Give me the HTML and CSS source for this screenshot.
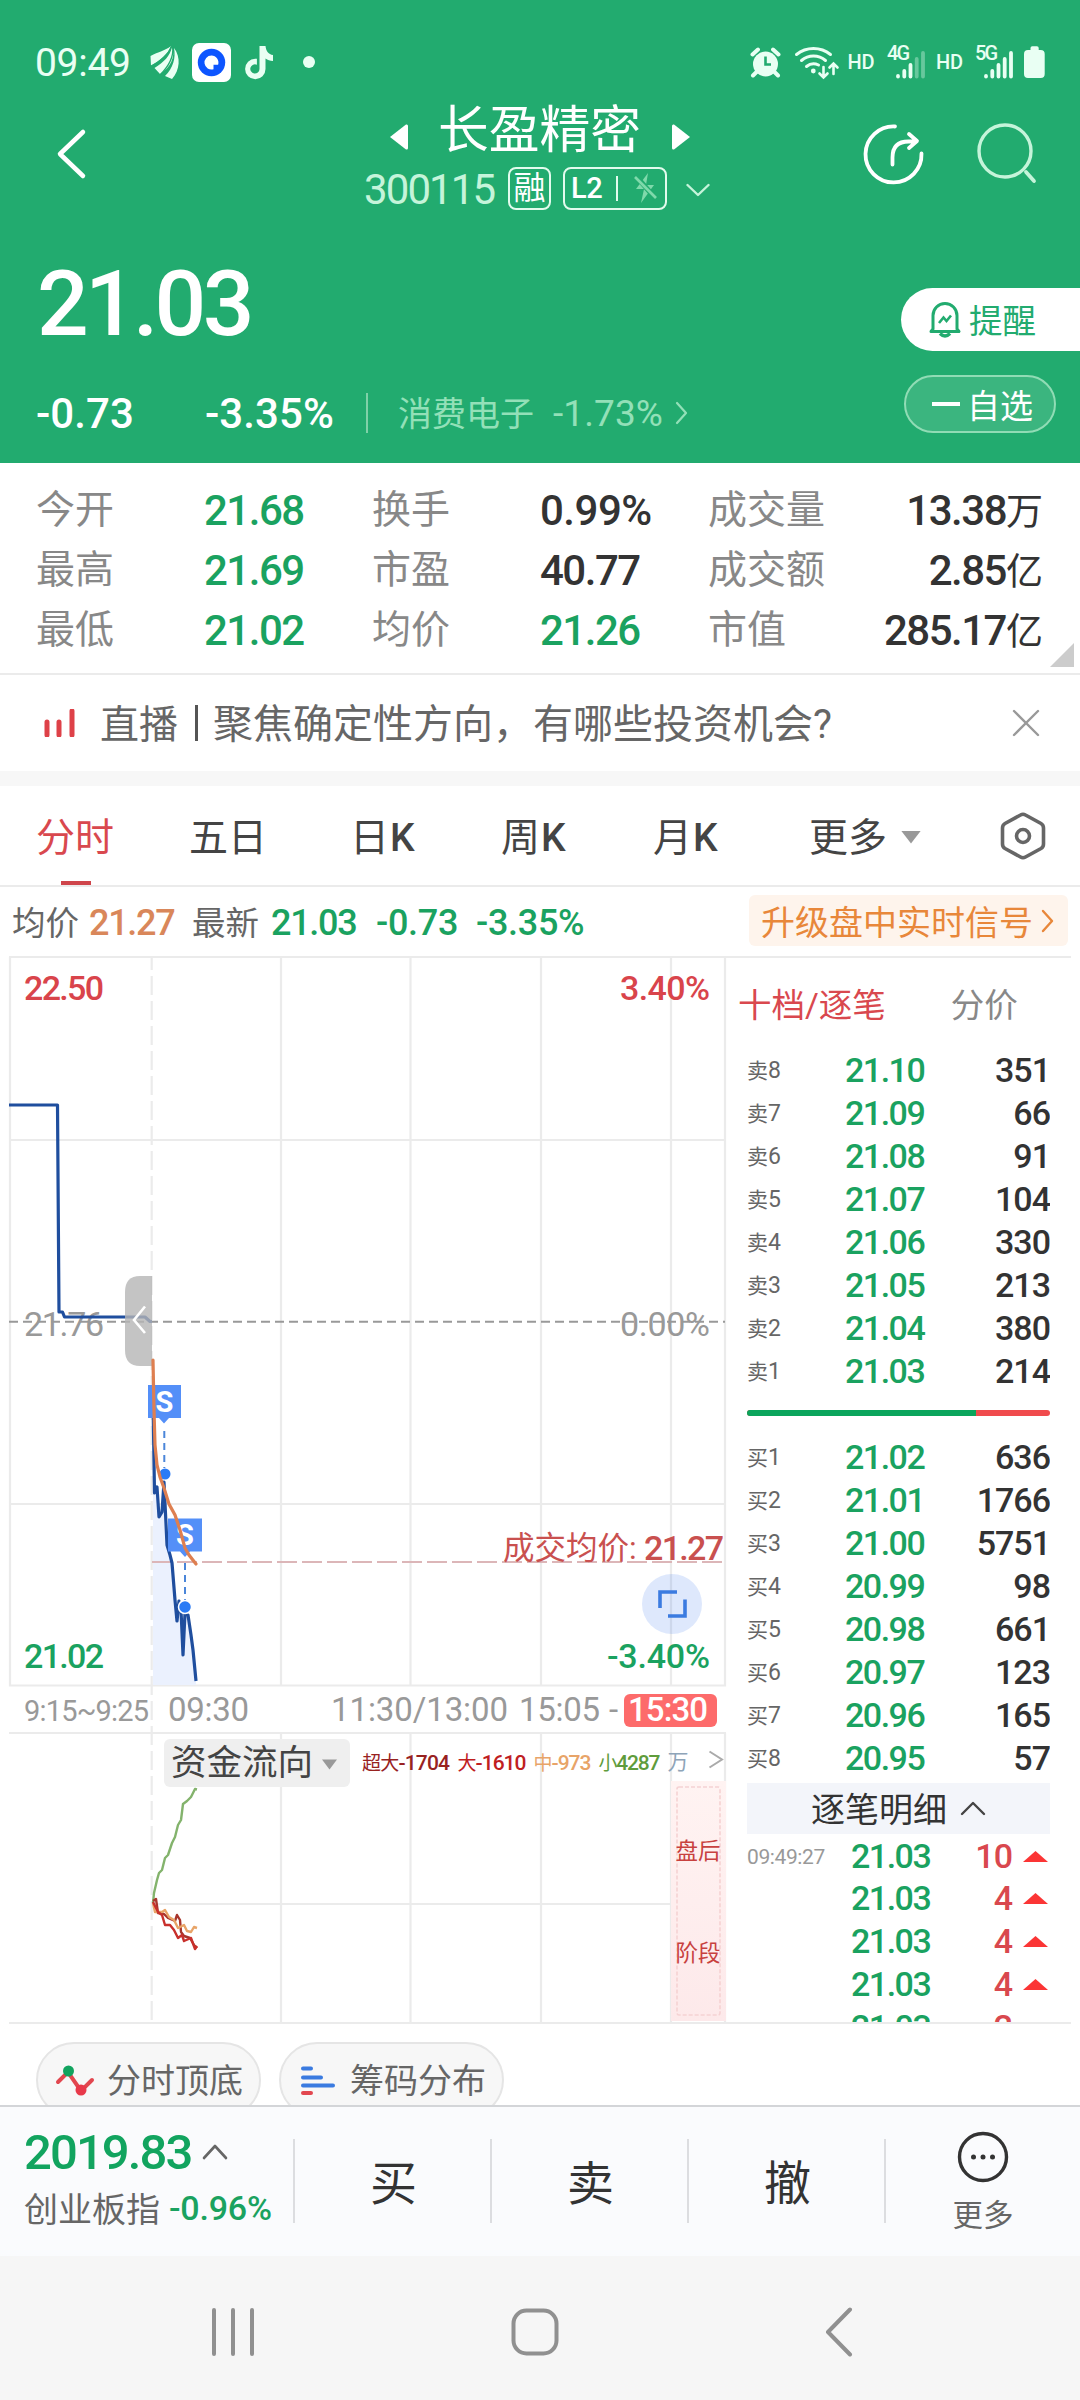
FILE: index.html
```html
<!DOCTYPE html>
<html lang="zh-CN">
<head>
<meta charset="utf-8">
<title>长盈精密 300115</title>
<link rel="stylesheet" href="styles.css">
</head>
<body>
<div class="screen">
<header class="hero">
  <div class="status">
    <span class="clock">09:49</span>
    <svg class="status-apps" width="172" height="44" viewBox="148 40 172 44" fill="#e9fff3">
      <path d="M150.500 56C157 52 165 51 171 46C168 54 160 60 151 66Z"/><path d="M154.500 68C164 62 170 56 172 47C176 57 170 68 160 74Z"/><path d="M165 76C173 68 176 58 174 48C181 57 180 70 172 79Z" /><path d="M150 66.500C160 62 168 56 171.500 46.500M160 75C168 67 174 58 172.700 47" fill="none" stroke="#22ab6f" stroke-width="1.300"/>
      <rect x="192" y="43" width="39" height="39" rx="7" fill="#fff"/>
      <circle cx="211.500" cy="62.500" r="13.700" fill="#0d55ff"/>
      <path d="M211.500 55.500a7 7 0 1 0 2 13.700v-4.500h4.600a7 7 0 0 0-6.600-9.200z" fill="#fff"/>
      <path d="M259.500 46h6c.500 5 3 8.500 7.500 9v6c-3 0-5.500-1-7.500-2.500v10.500a10.200 10.200 0 1 1-10.200-10.200h1.600v6a4.600 4.600 0 1 0 2.600 4.200z"/>
      <circle cx="309" cy="62" r="6"/>
    </svg>
    <svg class="status-sys" width="300" height="44" viewBox="748 40 300 44" fill="#e9fff3" stroke="none">
      <circle cx="765.500" cy="64" r="12.500"/><path d="M752.500 55l5.500-5M778.500 55l-5.500-5M757 72l-4 4M774 72l4 4" stroke="#e9fff3" stroke-width="4" stroke-linecap="round" transform="translate(0 -.5)"/><path d="M765.500 56.500v8h5.500" fill="none" stroke="#22ab6f" stroke-width="2.600"/>
      <g fill="none" stroke="#e9fff3" stroke-width="3" stroke-linecap="round"><path d="M796.500 54.500a27 27 0 0 1 34 0"/><path d="M801.500 60.500a18.500 18.500 0 0 1 24 0"/><path d="M806.500 66.500a11 11 0 0 1 12 -1.500"/><path d="M823.500 67v10M819.500 73.500l4 4 4-4M833.500 74v-10M829.500 67.500l4-4 4 4" stroke-width="2.600"/></g><circle cx="813.300" cy="71" r="2.400"/>
      <text class="sys-text" x="847.500" y="69" textLength="27">HD</text>
      <text class="sys-text" x="887" y="59.500" font-size="19" textLength="23">4G</text>
      <g stroke="#e9fff3" stroke-width="3.800" stroke-linecap="round"><path d="M898 76v.500M904.300 71v5.500M910.500 65v11.500"/><path d="M916.700 59v17.500M923 53v23.500" opacity=".35"/></g>
      <text class="sys-text" x="936" y="69" textLength="27">HD</text>
      <text class="sys-text" x="975" y="59.500" font-size="19" textLength="23">5G</text>
      <path d="M986 76v.500M992.300 71v5.500M998.500 65v11.500M1004.700 59v17.500M1011 53v23.500" stroke="#e9fff3" stroke-width="3.800" stroke-linecap="round"/>
      <path d="M1030.500 50v-2q0-1.800 1.800-1.800h4.600q1.800 0 1.800 1.800v2h2q4 0 4 4v20q0 4-4 4h-12.700q-4 0-4-4v-20q0-4 4-4z"/>
    </svg>
  </div>

  <div class="titlebar">
    <svg class="back" width="34" height="56" viewBox="54 126 34 56"><path d="M83 132L60 154L83 176" class="ln white" stroke-width="4.500"/></svg>
    <div class="title-block">
      <div class="title-row">
        <svg width="20" height="28" viewBox="0 0 20 28"><path d="M1 14L17 1.500Q19 1 19 3V25Q19 27 17 26.500Z" fill="#fff"/></svg>
        <h1>长盈精密</h1>
        <svg width="20" height="28" viewBox="0 0 20 28"><path d="M19 14L3 1.500Q1 1 1 3V25Q1 27 3 26.500Z" fill="#fff"/></svg>
      </div>
      <div class="code-row">
        <span class="code">300115</span>
        <span class="tag tag-margin">融</span>
        <span class="tag tag-l2"><b>L2</b><i></i>
          <svg width="24" height="32" viewBox="0 0 24 32"><path d="M14 1L2 17H10L7 31L20 13H12Z" fill="#7fd9ab"/><path d="M1 3L22 27" stroke="#22ab6f" stroke-width="5"/><path d="M1 5L22 26" stroke="#7fd9ab" stroke-width="2.600"/></svg>
        </span>
        <svg class="drop" width="24" height="14" viewBox="0 0 24 14"><path d="M1.500 2L12 12L22.500 2" class="ln" stroke="#c5f4da" stroke-width="2.400"/></svg>
      </div>
    </div>
    <svg class="title-actions" width="180" height="70" viewBox="860 120 180 70">
      <path d="M895 127A28 28 0 1 0 921.500 154" class="ln white" stroke-width="3.800" transform="translate(0 -.5)"/>
      <path d="M892.500 164.500v-7q0-16 16-16h7M909 134l8 7-8 7" class="ln white" stroke-width="3.800"/>
      <circle cx="1005" cy="151" r="26" class="ln" stroke="#c5f4da" stroke-width="3.400"/><path d="M1026 172L1034 181" class="ln" stroke="#c5f4da" stroke-width="3.800"/>
    </svg>
  </div>

  <div class="quote">
    <div class="quote-main">
      <div class="price">21.03</div>
      <div class="change-row">
        <span class="chg">-0.73</span><span class="pct">-3.35%</span><i class="vline"></i>
        <span class="sector">消费电子</span><span class="sector-pct">-1.73%</span>
        <svg width="14" height="24" viewBox="0 0 14 24"><path d="M2 2L11 12L2 22" class="ln" stroke="#93e0b8" stroke-width="2.200"/></svg>
      </div>
    </div>
    <div class="quote-actions">
      <div class="remind">
        <svg width="34" height="38" viewBox="0 0 34 38" fill="none" stroke="#22ab6f" stroke-width="3"><path d="M5 28V14.500a12 12 0 0 1 24 0V28L31 30.500H3Z" stroke-linejoin="round"/><path d="M12 32.500q5 5 10 0" stroke-width="3.500"/><path d="M11 22l4.500-5.500 3 3.500 4.500-5.500" stroke-width="2.600"/></svg>
        <span>提醒</span>
      </div>
      <div class="watch"><i></i><span>自选</span></div>
    </div>
  </div>
</header>

<section class="stats">
  <span class="k">今开</span><span class="v g">21.68</span><span class="k">换手</span><span class="v wide">0.99%</span><span class="k">成交量</span><span class="v r">13.38<em>万</em></span>
  <span class="k">最高</span><span class="v g">21.69</span><span class="k">市盈</span><span class="v">40.77</span><span class="k">成交额</span><span class="v r">2.85<em>亿</em></span>
  <span class="k">最低</span><span class="v g">21.02</span><span class="k">均价</span><span class="v g">21.26</span><span class="k">市值</span><span class="v r">285.17<em>亿</em></span>
  <i class="corner"></i>
</section>

<section class="banner">
  <svg width="32" height="28" viewBox="0 0 32 28"><path d="M3 13v13M15 13v13M28 2v24" stroke="#de4148" stroke-width="5" stroke-linecap="round"/></svg>
  <span class="banner-tag">直播</span><i></i><span class="banner-text">聚焦确定性方向，有哪些投资机会?</span>
  <svg width="28" height="28" viewBox="0 0 28 28"><path d="M2 2L26 26M26 2L2 26" class="ln" stroke="#999" stroke-width="2.400"/></svg>
</section>

<nav class="tabs">
  <span class="tab active">分时</span><span class="tab">五日</span><span class="tab">日<b>K</b></span><span class="tab">周<b>K</b></span><span class="tab">月<b>K</b></span>
  <span class="tab">更多</span><i class="caret"></i>
  <svg width="46" height="48" viewBox="0 0 46 48" fill="none" stroke="#666" stroke-width="3.600"><path d="M20.500 3Q23 1.500 25.500 3L41 11.500Q43.500 13 43.500 16V32Q43.500 35 41 36.500L25.500 45Q23 46.500 20.500 45L5 36.500Q2.500 35 2.500 32V16Q2.500 13 5 11.500Z"/><circle cx="23" cy="24" r="6.500"/></svg>
</nav>

<section class="info">
  <span>均价</span><span class="n orange">21.27</span><span>最新</span><span class="n g">21.03</span><span class="n g signed">-0.73</span><span class="n g signed">-3.35%</span>
  <a class="signal"><span>升级盘中实时信号</span><svg width="14" height="24" viewBox="0 0 14 24"><path d="M2 2L11 12L2 22" class="ln" stroke="#e8873a" stroke-width="2.400"/></svg></a>
</section>

<main class="market">
  <svg class="chart" width="731" height="1068" viewBox="0 956 731 1068">
    <g stroke="#ebebeb" stroke-width="2.200" fill="none">
      <path d="M10 957V1685.500H725V957M281 957V1685M410.500 957V1685M541 957V1685M671 957V1685M10 1140H725M10 1504H725"/>
      <path d="M9 1733H726M9 2023H731M281 1733V2023M410.500 1733V2023M541 1733V2023M671 1733V2023M725 1733V2023M151 1904H671"/>
      <path d="M151.700 958V2023" stroke-dasharray="19 6" stroke-dashoffset="7"/>
    </g>
    <path d="M153 1400L154.500 1493L157 1487L159 1517L162 1512L164 1482L167 1545L172 1563L177 1621L181 1610L183 1655L185 1613L188 1615L196 1681V1685H153Z" fill="#ebf1fe"/>
    <path d="M9 1321.700H725" stroke="#999" stroke-width="2" stroke-dasharray="9 5"/>
    <path d="M152 1562H725" stroke="#dcb6b8" stroke-width="2" stroke-dasharray="20 5"/>
    <text class="tx gray" x="24" y="1336" textLength="80">21.76</text>
    <text class="tx gray" x="620" y="1336" textLength="90">0.00%</text>
    <g fill="none" stroke="#1f4e9e" stroke-width="3.200" stroke-linejoin="round">
      <path d="M9 1105H57.500L59 1312H62.500L64.500 1317H145L150 1321.500H152"/>
      <path d="M153 1400L154.500 1493L157 1487L159 1517L162 1512L164 1482L167 1545L170 1555L172 1563L175 1600L177 1621L179 1601L181 1610L183 1655L185 1613L188 1615L191 1635L193 1650L196 1681"/>
    </g>
    <path d="M152 1276H140Q125 1276 125 1292V1350Q125 1366 140 1366H152Z" fill="#b5b5b5" opacity=".8"/>
    <path d="M145 1306.500L134 1320L145 1333" fill="none" stroke="#fff" stroke-width="2.600"/>
    <g fill="#548ff8"><path d="M148 1385H181V1418H169L164 1423.500L159 1418H148ZM168 1518.500H202V1551.500H190L185 1557L180 1551.500H168Z"/></g>
    <path d="M164.300 1431V1468M185 1563V1600" stroke="#4b86d9" stroke-width="2" stroke-dasharray="7 5"/>
    <circle cx="165" cy="1474" r="5.500" fill="#2a7bf5"/><circle cx="185" cy="1607" r="6.500" fill="#2a7bf5" stroke="#fff" stroke-width="1.500"/>
    <text class="mark" x="164.500" y="1411.500">S</text><text class="mark" x="185" y="1545">S</text>
    <path d="M153 1360L154 1410L155 1445L157 1465L160 1477L164 1488L169 1504L175 1515L180 1530L185 1548L189 1555L196 1564" fill="none" stroke="#de7f50" stroke-width="3.200" stroke-linecap="round"/>
    <text class="tx red" x="24" y="1000" textLength="80">22.50</text>
    <text class="tx red" x="620" y="1000" textLength="90">3.40%</text>
    <text class="tx green" x="24" y="1668" textLength="80">21.02</text>
    <text class="tx green" x="607" y="1667.500" textLength="103">-3.40%</text>
    <text class="avg" x="503" y="1558.500" font-size="31.500">成交均价:</text><text class="avg tx" x="644" y="1560" textLength="80">21.27</text>
    <circle cx="672" cy="1604" r="30" fill="#3c78f0" opacity=".17"/>
    <path d="M677 1592H660V1608M685 1599.500V1616H668" fill="none" stroke="#3b7be0" stroke-width="3.600"/>
    <g class="axis">
      <text x="24" y="1721" font-size="29" textLength="125">9:15~9:25</text>
      <text x="168" y="1720.500" textLength="81">09:30</text>
      <text x="331" y="1720.500" textLength="177">11:30/13:00</text>
      <text x="519" y="1720.500" textLength="81">15:05</text>
      <text x="609" y="1720.500">-</text>
      <rect x="624" y="1694" width="93" height="33" rx="6" fill="#fd6b6b"/>
      <text x="628" y="1720.500" textLength="80" class="on-red">15:30</text>
    </g>
    <rect x="164" y="1739" width="186" height="48" rx="6" fill="#efefef"/>
    <text class="cjk" x="171" y="1775" font-size="35.500" fill="#444">资金流向</text>
    <path d="M322 1759.500H337L329.500 1769.500Z" fill="#999"/>
    <g class="flow">
      <text x="362" y="1770" fill="#98221f" textLength="88"><tspan font-size="19">超大</tspan>-1704</text>
      <text x="457.500" y="1770" fill="#c0201f" textLength="69"><tspan font-size="19">大</tspan>-1610</text>
      <text x="533.500" y="1770" fill="#e8a468" textLength="58"><tspan font-size="19">中</tspan>-973</text>
      <text x="598.500" y="1770" fill="#5f9c3c" textLength="62"><tspan font-size="19">小</tspan>4287</text>
      <text x="667.500" y="1769" fill="#8ea4b8"><tspan font-size="21">万</tspan></text>
    </g>
    <path d="M709.500 1751.500L722 1759.500L709.500 1767.500" fill="none" stroke="#aaa" stroke-width="2"/>
    <defs><linearGradient id="after" x1="0" y1="0" x2="0" y2="1"><stop offset="0" stop-color="#fff3f2"/><stop offset="1" stop-color="#fde9ea"/></linearGradient></defs>
    <rect x="671" y="1781" width="55" height="240" fill="url(#after)"/>
    <rect x="677" y="1787" width="43" height="228" rx="2" fill="none" stroke="#f5d2d3" stroke-width="1.600" stroke-dasharray="4 2"/>
    <text class="cjk" x="675.500" y="1859" font-size="22.500" fill="#c8413f">盘后</text>
    <text class="cjk" x="675.500" y="1961" font-size="22.500" fill="#c8413f">阶段</text>
    <g fill="none" stroke-width="2.400" stroke-linejoin="round">
      <path d="M153 1903L154 1893L157 1880L159 1873L162 1870L165 1858L168 1855L172 1843L175 1837L178 1825L181 1820L183 1804L187 1801L191 1797L195 1789L197 1789.500" stroke="#83b36c"/>
      <path d="M153 1901L156 1899L158 1913L164 1914L168 1918L175 1921L177 1915L180 1920L181 1932L184 1936L190 1938L194 1945L197 1948" stroke="#a8352c"/>
      <path d="M153 1903L155 1912L162 1912L165 1910L169 1917L174 1920L178 1928L184 1925L187 1931L191 1932L194 1927L197 1928" stroke="#e8a468"/>
      <path d="M153 1902L158 1912L162 1915L165 1925L170 1925L174 1930L178 1938L182 1935L184 1941L191 1938L195 1949L197 1946" stroke="#c8302c"/>
    </g>
  </svg>

  <aside class="book">
    <div class="book-tabs"><span class="on">十档/逐笔</span><span>分价</span></div>
    <div class="levels">
      <p><span>卖<b>8</b></span><b class="g">21.10</b><b>351</b></p>
      <p><span>卖<b>7</b></span><b class="g">21.09</b><b>66</b></p>
      <p><span>卖<b>6</b></span><b class="g">21.08</b><b>91</b></p>
      <p><span>卖<b>5</b></span><b class="g">21.07</b><b>104</b></p>
      <p><span>卖<b>4</b></span><b class="g">21.06</b><b>330</b></p>
      <p><span>卖<b>3</b></span><b class="g">21.05</b><b>213</b></p>
      <p><span>卖<b>2</b></span><b class="g">21.04</b><b>380</b></p>
      <p><span>卖<b>1</b></span><b class="g">21.03</b><b>214</b></p>
    </div>
    <div class="ratio"><i></i></div>
    <div class="levels">
      <p><span>买<b>1</b></span><b class="g">21.02</b><b>636</b></p>
      <p><span>买<b>2</b></span><b class="g">21.01</b><b>1766</b></p>
      <p><span>买<b>3</b></span><b class="g">21.00</b><b>5751</b></p>
      <p><span>买<b>4</b></span><b class="g">20.99</b><b>98</b></p>
      <p><span>买<b>5</b></span><b class="g">20.98</b><b>661</b></p>
      <p><span>买<b>6</b></span><b class="g">20.97</b><b>123</b></p>
      <p><span>买<b>7</b></span><b class="g">20.96</b><b>165</b></p>
      <p><span>买<b>8</b></span><b class="g">20.95</b><b>57</b></p>
    </div>
    <div class="detail-head"><span>逐笔明细</span><svg width="26" height="15" viewBox="0 0 26 15"><path d="M2 13L13 2L24 13" class="ln" stroke="#444" stroke-width="2.400"/></svg></div>
    <div class="ticks">
      <p><span>09:49:27</span><b class="g">21.03</b><b class="up">10</b><i></i></p>
      <p><span></span><b class="g">21.03</b><b class="up">4</b><i></i></p>
      <p><span></span><b class="g">21.03</b><b class="up">4</b><i></i></p>
      <p><span></span><b class="g">21.03</b><b class="up">4</b><i></i></p>
      <p><span></span><b class="g">21.03</b><b class="up">2</b><i></i></p>
    </div>
  </aside>
</main>

<section class="pills">
  <div class="pill"><svg width="40" height="32" viewBox="0 0 40 32"><path d="M3 18L13 8L26 27L37 16" fill="none" stroke="#e2474f" stroke-width="4" stroke-linecap="round"/><circle cx="13.500" cy="7" r="5.500" fill="#12a45f"/><circle cx="26" cy="26" r="5.500" fill="#e8394a"/></svg><span>分时顶底</span></div>
  <div class="pill"><svg width="40" height="32" viewBox="0 0 40 32" stroke-width="4" stroke-linecap="round"><path d="M5 4.500H13M5 13.500H23M5 21.500H35" stroke="#3b7be0"/><path d="M5 29H13" stroke="#e2474f"/></svg><span>筹码分布</span></div>
</section>

<footer class="trade">
  <div class="index">
    <div class="index-top"><b>2019.83</b><svg width="26" height="16" viewBox="0 0 26 16"><path d="M2 14L13 2L24 14" class="ln" stroke="#666" stroke-width="2.600"/></svg></div>
    <div class="index-sub"><span>创业板指</span><b>-0.96%</b></div>
  </div>
  <div class="act">买</div><div class="act">卖</div><div class="act">撤</div>
  <div class="more">
    <svg width="52" height="52" viewBox="0 0 52 52"><circle cx="26" cy="26" r="23.500" class="ln" stroke="#333" stroke-width="3.400"/><g fill="#333"><circle cx="16.500" cy="26" r="2.500"/><circle cx="26" cy="26" r="2.500"/><circle cx="35.500" cy="26" r="2.500"/></g></svg>
    <span>更多</span>
  </div>
</footer>

<div class="navbar">
  <svg width="48" height="50" viewBox="0 0 48 50"><path d="M5 3V47M24 3V47M43 3V47" class="ln nav-ln"/></svg>
  <svg width="50" height="50" viewBox="0 0 50 50"><rect x="3.500" y="3.500" width="43" height="43" rx="13" class="ln nav-ln"/></svg>
  <svg width="30" height="50" viewBox="0 0 30 50"><path d="M26 2.500L4 25L26 47.500" class="ln nav-ln"/></svg>
</div>
</div>
</body>
</html>
```
FILE: styles.css
```css
* { box-sizing: border-box; }
body { margin: 0; background: #fff; font-family: Roboto, "Noto Sans CJK SC", sans-serif; color: #333; }
h1, p { margin: 0; font-weight: 400; }
b { font-weight: 500; }
em { font-style: normal; }
svg { display: block; flex: none; }
span { white-space: nowrap; }
.screen { width: 1080px; height: 2400px; overflow: hidden; display: flex; flex-direction: column; }
.screen > * { flex: none; }
.ln { fill: none; stroke-linecap: round; stroke-linejoin: round; }
.white { stroke: #fff; }
.g { color: #1aa260; }

/* header */
.hero { height: 463px; background: #22ab6f; color: #fff; display: flex; flex-direction: column; }
.status { height: 84px; padding: 40px 32px 0 35px; display: flex; }
.clock { width: 113px; font-size: 39px; line-height: 46px; letter-spacing: -.3px; color: #e9fff3; }
.status-sys { margin-left: auto; }
.sys-text { font-size: 20px; font-weight: 500; }

.titlebar { height: 146px; padding-left: 54px; display: flex; }
.back { margin-top: 42px; }
.title-block { margin: 16px 0 0 277px; width: 345px; }
.title-row { display: flex; align-items: center; height: 60px; padding-left: 24px; }
.title-row svg { margin-top: 14px; }
.title-row h1 { margin: 2px 30px 0 29px; font-size: 50.750px; line-height: 60px; white-space: nowrap; }
.code-row { display: flex; align-items: center; height: 56px; }
.code { width: 144px; margin-left: -1px; font-size: 42px; letter-spacing: -1.900px; color: #c5f4da; margin-top: 3px; }
.tag { height: 43px; border: 2px solid #e2fbed; border-radius: 8px; display: flex; align-items: center; }
.tag-margin { width: 43px; justify-content: center; font-size: 32px; line-height: 38px; }
.tag-l2 { width: 104px; margin-left: 12px; padding-left: 6px; font-size: 29px; letter-spacing: -.5px; }
.tag-l2 i { width: 2px; height: 25px; background: #e2fbed; margin: 0 16px 0 14px; }
.drop { margin: 3px 0 0 19px; }
.title-actions { margin-left: 150px; margin-top: 36px; }

.quote { display: flex; justify-content: space-between; }
.quote-main { width: 720px; padding-left: 36px; }
.price { margin: 14px 0 0 1px; height: 120px; font-size: 91px; line-height: 120px; font-weight: 500; letter-spacing: -3.700px; }
.change-row { display: flex; align-items: center; height: 48px; margin-top: 25px; font-size: 42px; font-weight: 500; letter-spacing: .1px; }
.chg { width: 169px; }
.pct { width: 161px; }
.vline { width: 2px; height: 40px; background: #7fd1a8; margin-right: 30px; }
.sector { width: 155px; font-size: 34px; font-weight: 400; letter-spacing: 0; color: #93e0b8; margin-top: -3px; }
.sector-pct { width: 122px; font-size: 37px; font-weight: 400; letter-spacing: .1px; color: #93e0b8; }
.quote-actions { display: flex; flex-direction: column; align-items: flex-end; }
.remind { margin-top: 58px; width: 179px; height: 63px; padding-left: 27px; border-radius: 32px 0 0 32px; background: #fff; color: #22ab6f; display: flex; align-items: center; gap: 7px; font-size: 33.500px; }
.remind span, .pill span { margin-top: -3px; }
.watch { margin: 24px 24px 0 0; width: 152px; height: 58px; padding-left: 26px; border: 2px solid #90dcb5; border-radius: 29px; background: #3bb57f; display: flex; align-items: center; gap: 7px; font-size: 33px; }
.watch i { width: 28px; height: 4px; background: #fff; }

/* key figures */
.stats { position: relative; height: 212px; padding: 17px 37px 0 36px; border-bottom: 2px solid #ebebeb; display: grid; grid-template-columns: 168px 168px 168px 168px 150px 1fr; grid-auto-rows: 60px; line-height: 61px; font-size: 39px; }
.k { color: #888; }
.v { font-size: 42px; font-weight: 500; letter-spacing: -1.500px; }
.v.wide { letter-spacing: -.500px; }
.r { text-align: right; }
.v em { font-size: 37px; font-weight: 400; letter-spacing: 0; }
.corner { position: absolute; right: 6px; bottom: 6px; width: 24px; height: 24px; background: #ccc; clip-path: polygon(100% 0, 100% 100%, 0 100%); }

.banner { height: 111px; padding: 0 40px 0 44px; border-bottom: 15px solid #f7f7f7; display: flex; align-items: center; font-size: 40px; line-height: 60px; color: #666; }
.banner span { padding-top: 4px; }
.banner-tag { margin-left: 24px; font-size: 39px; }
.banner i { width: 3px; height: 36px; background: #555; margin: 0 15px 0 17px; }
.banner-text { flex: 1; }

.tabs { height: 101px; padding: 0 33px 0 36px; border-bottom: 2px solid #ebebeb; display: grid; grid-template-columns: 153px 161px 151px 152px 156px 92px 99px 46px; align-items: center; font-size: 39px; color: #444; }
.tab { height: 99px; line-height: 105px; }
.tab b { margin-left: 1px; }
.active { color: #d9484e; background: linear-gradient(#cf454b, #cf454b) 25px 100% / 30px 4px no-repeat; }
.caret { width: 20px; height: 13px; margin-top: 3px; background: #999; clip-path: polygon(0 0, 100% 0, 50% 100%); }

.info { height: 69px; padding: 0 12px; display: grid; grid-template-columns: 77px 103px 79px 105px 100px 273px 319px; align-items: center; font-size: 33.500px; color: #666; }
.info > span:not(.n) { margin-top: -2px; }
.n { font-size: 36px; font-weight: 500; letter-spacing: -1.300px; margin-top: 2px; }
.n.signed { letter-spacing: -.300px; }
.orange { color: #d9875a; }
.info .g { color: #1aa260; }
.signal { height: 51px; padding-left: 12px; border-radius: 6px; background: #fef4ec; color: #e8873a; font-size: 34px; display: flex; align-items: center; gap: 8px; margin-top: -2px; }

/* chart and order book */
.market { height: 1068px; display: flex; background: linear-gradient(#ebebeb, #ebebeb) 9px 0 / 1062px 2px no-repeat, linear-gradient(#ebebeb, #ebebeb) 9px 1066px / 1062px 2px no-repeat; }
.chart text { font-family: Roboto, "Noto Sans CJK SC", sans-serif; }
.chart .tx { font-size: 34px; font-weight: 500; }
.chart .gray { fill: #999; font-weight: 400; }
.chart .red { fill: #d9444b; }
.chart .green { fill: #1aa260; }
.chart .avg { fill: #c9504f; }
.chart .mark { font-size: 29px; font-weight: 700; fill: #fff; text-anchor: middle; }
.axis { font-size: 33px; fill: #999; }
.axis .on-red { fill: #fff; font-weight: 500; }
.flow { font-size: 21px; font-weight: 500; }
.flow tspan { font-weight: 400; }

.book { width: 319px; height: 1066px; overflow: hidden; }
.book-tabs { height: 93px; padding: 0 0 0 7px; display: flex; gap: 65px; align-items: center; font-size: 33.500px; color: #888; }
.book-tabs .on { color: #d9484e; }
.levels p { display: grid; grid-template-columns: 98px 100px 105px; height: 43px; line-height: 43px; font-size: 34px; letter-spacing: -1px; }
.levels { padding-left: 16px; }
.levels .g, .ticks .g { letter-spacing: -1.500px; }
.levels span { font-size: 21px; letter-spacing: 0; color: #666; }
.levels span b { font-size: 23px; font-weight: 400; }
.levels p > b:last-child { text-align: right; }
.ratio { width: 303px; height: 6px; margin: 17px 0 20px 16px; border-radius: 3px; background: #f04b4d; overflow: hidden; }
.ratio i { display: block; width: 229px; height: 6px; background: #0ba55c; }
.detail-head { width: 303px; height: 51px; margin: 3px 0 0 16px; background: #f3f5fa; display: flex; align-items: center; justify-content: center; gap: 13px; font-size: 34px; }
.detail-head span { margin-top: -2px; }
.ticks { padding-left: 16px; }
.ticks p { display: grid; grid-template-columns: 104px 90px 71px 11px 25px; height: 43px; line-height: 43px; font-size: 34px; letter-spacing: -1px; align-items: center; }
.ticks span { font-size: 21px; letter-spacing: -.4px; color: #999; padding-top: 2px; }
.ticks .up { text-align: right; color: #d9484e; }
.ticks i { grid-column: 5; width: 25px; height: 11px; background: #fb3535; clip-path: polygon(50% 0, 100% 100%, 0 100%); }

.pills { height: 81px; padding: 18px 36px 0; overflow: hidden; display: flex; gap: 18px; }
.pill { width: 225px; height: 76px; padding-left: 17px; border: 2px solid #e5e5e5; border-radius: 38px; background: #f7f7f7; display: flex; align-items: center; gap: 12px; font-size: 34px; color: #666; }

/* trading bar */
.trade { height: 151px; border-top: 2px solid #d3d5d8; background: #fafbfd; display: grid; grid-template-columns: 295px 197px 197px 197px 1fr; }
.trade > div { background: linear-gradient(#dcdde0, #dcdde0) 100% 32px / 2px 84px no-repeat; }
.trade > .more { background: none; padding-top: 24px; display: flex; flex-direction: column; align-items: center; font-size: 30.500px; line-height: 44px; color: #666; gap: 11px; }
.index { padding: 20px 0 0 24px; }
.index-top { display: flex; align-items: center; height: 50px; gap: 11px; font-size: 49px; letter-spacing: -1.900px; color: #12a45f; }
.index-sub { display: flex; align-items: center; height: 50px; margin-top: 6px; gap: 9px; font-size: 34px; color: #666; }
.index-sub span { margin-top: -2px; }
.index-sub b { letter-spacing: -.2px; color: #1aa260; }
.act { text-align: center; font-size: 47px; line-height: 154px; }

.navbar { height: 144px; padding: 51px 226px 0 209px; background: #f6f6f6; display: grid; grid-template-columns: 301px 314px 30px; }
.nav-ln { stroke: #909090; stroke-width: 4; }
```
